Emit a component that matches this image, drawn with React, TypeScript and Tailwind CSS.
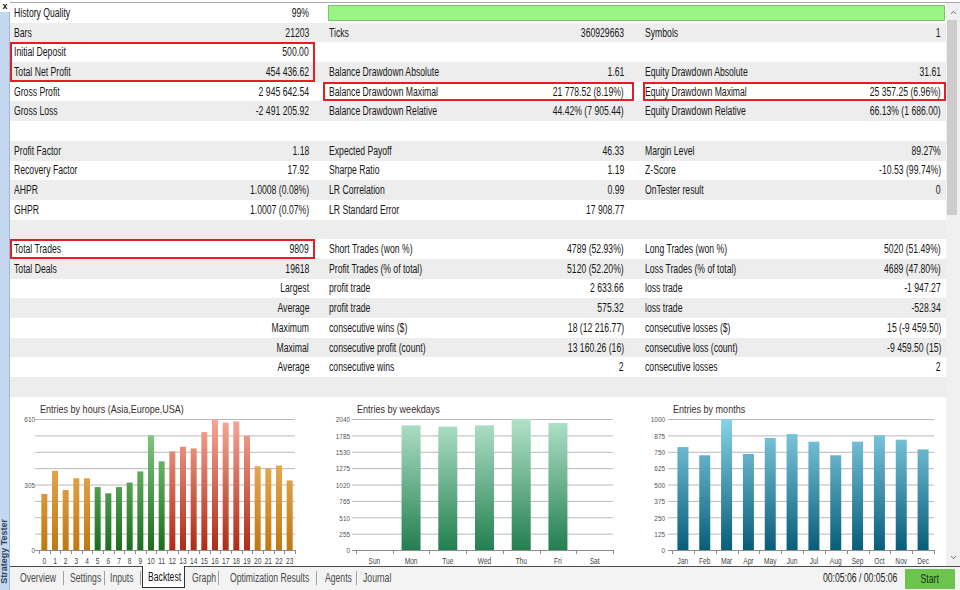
import { ChevronDown, ChevronUp } from "lucide-react";

// MT5 strategy tester "Backtest" tab, squeezed into 960x590.
// The source screenshot is horizontally compressed, so text is squeezed with scale-x.

const RED_FULL = "shadow-[inset_0_0_0_2px_#e31e24]";
const RED_TOP = "shadow-[inset_2px_2px_0_#e31e24,inset_-2px_0_0_#e31e24]";
const RED_BOTTOM = "shadow-[inset_2px_-2px_0_#e31e24,inset_-2px_0_0_#e31e24]";

const boxes: Record<string, string> = {
  "2-0": RED_TOP,
  "3-0": RED_BOTTOM,
  "4-1": RED_FULL,
  "4-2": RED_FULL,
  "12-0": RED_FULL,
};

const rows: string[][] = [
  ["History Quality", "99%"],
  ["Bars", "21203", "Ticks", "360929663", "Symbols", "1"],
  ["Initial Deposit", "500.00", "", "", "", ""],
  ["Total Net Profit", "454 436.62", "Balance Drawdown Absolute", "1.61", "Equity Drawdown Absolute", "31.61"],
  ["Gross Profit", "2 945 642.54", "Balance Drawdown Maximal", "21 778.52 (8.19%)", "Equity Drawdown Maximal", "25 357.25 (6.96%)"],
  ["Gross Loss", "-2 491 205.92", "Balance Drawdown Relative", "44.42% (7 905.44)", "Equity Drawdown Relative", "66.13% (1 686.00)"],
  ["", "", "", "", "", ""],
  ["Profit Factor", "1.18", "Expected Payoff", "46.33", "Margin Level", "89.27%"],
  ["Recovery Factor", "17.92", "Sharpe Ratio", "1.19", "Z-Score", "-10.53 (99.74%)"],
  ["AHPR", "1.0008 (0.08%)", "LR Correlation", "0.99", "OnTester result", "0"],
  ["GHPR", "1.0007 (0.07%)", "LR Standard Error", "17 908.77", "", ""],
  ["", "", "", "", "", ""],
  ["Total Trades", "9809", "Short Trades (won %)", "4789 (52.93%)", "Long Trades (won %)", "5020 (51.49%)"],
  ["Total Deals", "19618", "Profit Trades (% of total)", "5120 (52.20%)", "Loss Trades (% of total)", "4689 (47.80%)"],
  ["", "Largest", "profit trade", "2 633.66", "loss trade", "-1 947.27"],
  ["", "Average", "profit trade", "575.32", "loss trade", "-528.34"],
  ["", "Maximum", "consecutive wins ($)", "18 (12 216.77)", "consecutive losses ($)", "15 (-9 459.50)"],
  ["", "Maximal", "consecutive profit (count)", "13 160.26 (16)", "consecutive loss (count)", "-9 459.50 (15)"],
  ["", "Average", "consecutive wins", "2", "consecutive losses", "2"],
  ["", "", "", "", "", ""],
];

const groupCls = [
  "w-[305px] pl-[4px] pr-[6px]",
  "ml-[8px] w-[311px] pl-[6px] pr-[10px]",
  "ml-[9px] flex-1 pl-[2px] pr-[5px]",
];

const LBL = "inline-block origin-left scale-x-[0.72] whitespace-nowrap";
const VAL = "inline-block origin-right scale-x-[0.72] whitespace-nowrap";

function StatRow({ r, i }: { r: string[]; i: number }) {
  const bg = i % 2 ? "bg-[#ededed]" : "bg-white";
  if (i === 0) {
    return (
      <div className={`flex h-[19.7px] ${bg}`}>
        <div className={`flex h-full items-center justify-between ${groupCls[0]}`}>
          <span className={LBL}>{r[0]}</span>
          <span className={VAL}>{r[1]}</span>
        </div>
        <div className="ml-[13px] mr-px flex flex-1 items-center">
          <div className="h-[16px] w-full border border-[#7fc46c] bg-[#98f584]" />
        </div>
      </div>
    );
  }
  return (
    <div className={`flex h-[19.7px] ${bg}`}>
      {[0, 1, 2].map((g) => (
        <div
          key={g}
          className={`flex h-full items-center justify-between ${groupCls[g]} ${boxes[`${i}-${g}`] ?? ""}`}
        >
          <span className={LBL}>{r[g * 2]}</span>
          <span className={VAL}>{r[g * 2 + 1]}</span>
        </div>
      ))}
    </div>
  );
}

function SText({
  x,
  y,
  size,
  sx,
  fill,
  anchor = "start",
  children,
}: {
  x: number;
  y: number;
  size: number;
  sx: number;
  fill: string;
  anchor?: "start" | "middle" | "end";
  children: string;
}) {
  return (
    <text transform={`translate(${x} ${y}) scale(${sx} 1)`} fontSize={size} fill={fill} textAnchor={anchor}>
      {children}
    </text>
  );
}

type ChartProps = {
  width: number;
  title: string;
  left: number;
  right: number;
  labelX: number;
  yLabels: (string | null)[];
  xLabels: string[];
  values: number[];
  max: number;
  barW: number;
  fill: (i: number) => string;
  stops: [string, string, string][];
};

const TOP = 22;
const BOTTOM = 153;

function BarChart(p: ChartProps) {
  const slot = (p.right - p.left) / p.values.length;
  const plotH = BOTTOM - TOP;
  return (
    <svg width={p.width} height={169} className="shrink-0" fontFamily="'Liberation Sans',Arial,sans-serif">
      <defs>
        {p.stops.map(([gid, top, bot]) => (
          <linearGradient key={gid} id={gid} gradientUnits="userSpaceOnUse" x1="0" y1={TOP} x2="0" y2={BOTTOM}>
            <stop offset="0" stopColor={top} />
            <stop offset="1" stopColor={bot} />
          </linearGradient>
        ))}
      </defs>
      <SText x={p.left + 1} y={16} size={10.5} sx={0.86} fill="#3a2c2c">
        {p.title}
      </SText>
      {Array.from({ length: 9 }).map((_, k) => {
        const y = TOP + (k * plotH) / 8 + 0.5;
        return (
          <g key={k}>
            <line x1={p.left - 4} x2={p.right} y1={y} y2={y} stroke={k === 8 ? "#8c8c8c" : "#b8b8b8"} strokeWidth={1} />
            {p.yLabels[k] != null && (
              <SText x={p.labelX} y={y + 2.8} size={8} sx={0.8} fill="#555" anchor="end">
                {p.yLabels[k] as string}
              </SText>
            )}
          </g>
        );
      })}
      {p.values.map((v, i) => {
        const h = (v / p.max) * plotH;
        const cx = p.left + slot * (i + 0.5);
        return v > 0 ? (
          <rect key={i} x={cx - p.barW / 2} y={BOTTOM - h} width={p.barW} height={h} fill={p.fill(i)} />
        ) : null;
      })}
      {Array.from({ length: p.values.length + 1 }).map((_, i) => {
        const x = Math.round(p.left + slot * i) + 0.5;
        return <line key={i} x1={x} x2={x} y1={BOTTOM} y2={BOTTOM + 4} stroke="#8c8c8c" />;
      })}
      {p.xLabels.map((l, i) => (
        <SText key={l + i} x={p.left + slot * (i + 0.5)} y={167} size={8.5} sx={0.78} fill="#444" anchor="middle">
          {l}
        </SText>
      ))}
    </svg>
  );
}

const hours = [261, 369, 279, 334, 334, 293, 264, 293, 314, 366, 534, 413, 459, 481, 473, 549, 610, 593, 599, 532, 390, 380, 393, 324];
const weekdays = [0, 1941, 1921, 1941, 2040, 1978, 0];
const months = [786, 723, 1000, 733, 855, 885, 827, 723, 827, 875, 842, 768];

// cell widths / text offsets measured off the screenshot
const tabs = [
  { t: "Overview", w: "w-[53px] pl-[10px]", sep: true },
  { t: "Settings", w: "w-[40px] pl-[6px]", sep: true },
  { t: "Inputs", w: "w-[35px] pl-[5px]", sep: true },
  { t: "Backtest", w: "", sep: false },
  { t: "Graph", w: "w-[33px] pl-[7px]", sep: true },
  { t: "Optimization Results", w: "w-[97px] pl-[11px]", sep: true },
  { t: "Agents", w: "w-[39px] pl-[8px]", sep: true },
  { t: "Journal", w: "w-[44px] pl-[6px]", sep: false },
];

export default function App() {
  return (
    <div className="flex h-[590px] w-[960px] overflow-hidden bg-white text-[12px] text-[#161616] [font-family:'Liberation_Sans',Arial,sans-serif]">
      {/* docked panel handle */}
      <div className="flex w-[10px] shrink-0 flex-col">
        <div className="flex h-[12px] items-center justify-center bg-white text-[9px] font-bold leading-none">x</div>
        <div className="flex flex-1 flex-col justify-end border-r border-[#9fb9da] bg-[#c3d7ee] pb-[6px]">
          <span className="rotate-180 text-[9px] font-bold leading-[9px] text-[#2f4360] [writing-mode:vertical-rl]">
            Strategy Tester
          </span>
        </div>
      </div>

      <div className="flex min-w-0 flex-1 flex-col">
        <div className="flex min-h-0 flex-1 pt-[2px]">
          <div className="flex min-w-0 flex-1 flex-col border-t border-[#a8a8a8]">
            {rows.map((r, i) => (
              <StatRow key={i} r={r} i={i} />
            ))}
            <div className="flex flex-1 bg-white">
              <BarChart
                width={310}
                title="Entries by hours (Asia,Europe,USA)"
                left={29}
                right={285}
                labelX={25}
                yLabels={["610", null, null, null, "305", null, null, null, "0"]}
                xLabels={hours.map((_, i) => String(i))}
                values={hours}
                max={610}
                barW={6}
                fill={(i) => (i < 5 || i > 19 ? "url(#g-or)" : i < 12 ? "url(#g-gr)" : "url(#g-rd)")}
                stops={[
                  ["g-or", "#f6c273", "#c07810"],
                  ["g-gr", "#8dd28d", "#1b6e1b"],
                  ["g-rd", "#f5a896", "#ad2c16"],
                ]}
              />
              <BarChart
                width={320}
                title="Entries by weekdays"
                left={36}
                right={293}
                labelX={30}
                yLabels={["2040", "1785", "1530", "1275", "1020", "765", "510", "255", "0"]}
                xLabels={["Sun", "Mon", "Tue", "Wed", "Thu", "Fri", "Sat"]}
                values={weekdays}
                max={2040}
                barW={19}
                fill={() => "url(#g-wk)"}
                stops={[["g-wk", "#b2e2c9", "#237f50"]]}
              />
              <BarChart
                width={306}
                title="Entries by months"
                left={32}
                right={294}
                labelX={25}
                yLabels={["1000", "875", "750", "625", "500", "375", "250", "125", "0"]}
                xLabels={["Jan", "Feb", "Mar", "Apr", "May", "Jun", "Jul", "Aug", "Sep", "Oct", "Nov", "Dec"]}
                values={months}
                max={1000}
                barW={11}
                fill={() => "url(#g-mo)"}
                stops={[["g-mo", "#88d2e6", "#085d7a"]]}
              />
            </div>
          </div>
          {/* scrollbar */}
          <div className="flex w-[14px] shrink-0 flex-col items-center border-t border-[#a8a8a8] bg-[#f0f0f0]">
            <ChevronUp size={9} strokeWidth={2.5} className="mt-[5px] text-[#606060]" />
            <div className="mt-[3px] ml-[-2px] h-[195px] w-[10px] bg-[#cdcdcd]" />
            <div className="flex-1" />
            <ChevronDown size={9} strokeWidth={2.5} className="mb-[4px] text-[#606060]" />
          </div>
        </div>

        {/* tab strip */}
        <div className="flex h-[24px] shrink-0 items-start border-t border-[#4a4a4a] bg-[#f3f3f3] text-[#4a4a4a]">
          {tabs.map((tab) =>
            tab.t === "Backtest" ? (
              <div
                key={tab.t}
                className="-mt-px ml-px flex h-[22px] w-[43px] items-center border border-t-0 border-[#303030] bg-white pl-[5px] text-[#111]"
              >
                <span className={LBL}>{tab.t}</span>
              </div>
            ) : (
              <div key={tab.t} className="flex items-start">
                <div className={`flex h-[21px] items-center ${tab.w}`}>
                  <span className={LBL}>{tab.t}</span>
                </div>
                {tab.sep && <div className="mt-[4px] h-[14px] w-px bg-[#a0a0a0]" />}
              </div>
            ),
          )}
          <div className="flex-1" />
          <div className="flex h-[21px] items-center pr-[8px] text-[#222]">
            <span className={VAL}>00:05:06 / 00:05:06</span>
          </div>
          <div className="mr-[5px] mt-[2px] flex h-[20px] w-[50px] items-center justify-center bg-[#6cc44f] text-[#17320f]">
            <span className="inline-block scale-x-[0.72]">Start</span>
          </div>
        </div>
      </div>
    </div>
  );
}
